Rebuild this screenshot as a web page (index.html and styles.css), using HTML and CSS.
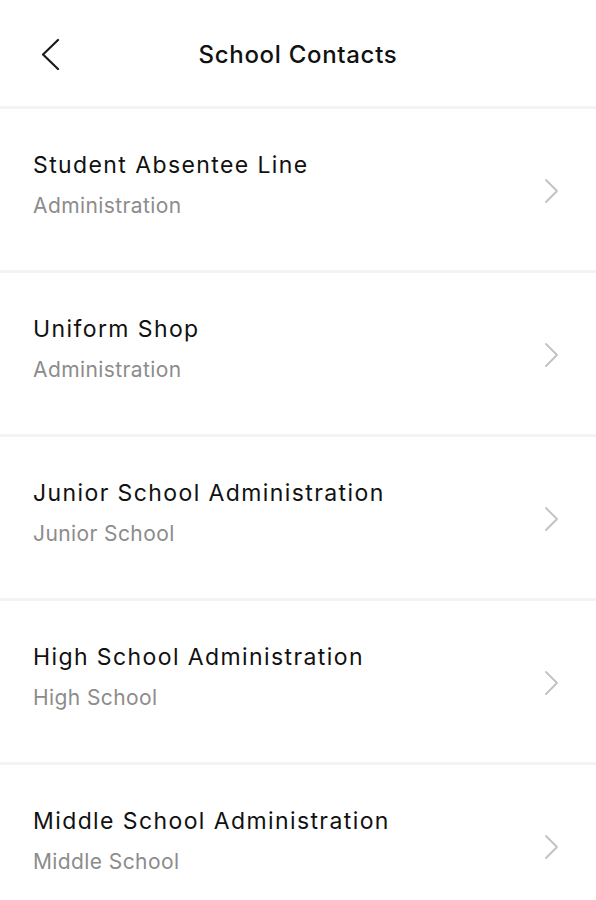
FILE: index.html
```html
<!DOCTYPE html>
<html lang="en">

<head>
    <meta charset="UTF-8">
    <meta name="viewport" content="width=device-width, initial-scale=1.0">
    <title>School Contacts</title>
    <link rel="stylesheet" href="styles.css">
</head>

<body>
    <div class="header">
        <a class="back-button" href="./">
            <svg width="20" height="32" viewBox="0 0 20 32">
                <polyline points="17,2 2,16.5 17,31" fill="none" stroke="#1a1a1a" stroke-width="2.2" stroke-linecap="round" stroke-linejoin="round" />
            </svg>
        </a>
        <h1>School Contacts</h1>
    </div>

    <!-- contact list -->
    <div class="contact-list">
        <a class="contact-row" href="#">
            <div class="contact-info">
                <div class="contact-name">Student Absentee Line</div>
                <div class="contact-group">Administration</div>
            </div>
            <svg class="chevron" width="16" height="26" viewBox="0 0 16 26">
                <polyline points="2,2 13,13 2,24" fill="none" stroke="#c2c2c2" stroke-width="1.8" stroke-linecap="round" stroke-linejoin="round" />
            </svg>
        </a>

        <a class="contact-row" href="#">
            <div class="contact-info">
                <div class="contact-name">Uniform Shop</div>
                <div class="contact-group">Administration</div>
            </div>
            <svg class="chevron" width="16" height="26" viewBox="0 0 16 26">
                <polyline points="2,2 13,13 2,24" fill="none" stroke="#c2c2c2" stroke-width="1.8" stroke-linecap="round" stroke-linejoin="round" />
            </svg>
        </a>

        <a class="contact-row" href="#">
            <div class="contact-info">
                <div class="contact-name">Junior School Administration</div>
                <div class="contact-group">Junior School</div>
            </div>
            <svg class="chevron" width="16" height="26" viewBox="0 0 16 26">
                <polyline points="2,2 13,13 2,24" fill="none" stroke="#c2c2c2" stroke-width="1.8" stroke-linecap="round" stroke-linejoin="round" />
            </svg>
        </a>

        <a class="contact-row" href="#">
            <div class="contact-info">
                <div class="contact-name">High School Administration</div>
                <div class="contact-group">High School</div>
            </div>
            <svg class="chevron" width="16" height="26" viewBox="0 0 16 26">
                <polyline points="2,2 13,13 2,24" fill="none" stroke="#c2c2c2" stroke-width="1.8" stroke-linecap="round" stroke-linejoin="round" />
            </svg>
        </a>

        <a class="contact-row" href="#">
            <div class="contact-info">
                <div class="contact-name">Middle School Administration</div>
                <div class="contact-group">Middle School</div>
            </div>
            <svg class="chevron" width="16" height="26" viewBox="0 0 16 26">
                <polyline points="2,2 13,13 2,24" fill="none" stroke="#c2c2c2" stroke-width="1.8" stroke-linecap="round" stroke-linejoin="round" />
            </svg>
        </a>
    </div>
</body>

</html>
```

FILE: styles.css
```css
body {
    font-family: Inter, "Noto Sans", sans-serif;
    background-color: #ffffff;
    color: #111111;
    margin: 0;
    padding: 0;
}

.header {
    display: flex;
    align-items: center;
    justify-content: center;
    position: relative;
    height: 106px;
    border-bottom: 3px solid #f3f3f3;
}

.header h1 {
    font-size: 24px;
    font-weight: 500;
    letter-spacing: 0.7px;
    margin: 0;
    padding-top: 2px;
}

.back-button {
    position: absolute;
    left: 41px;
    top: 38px;
    display: flex;
}

/* contact list */

.contact-row {
    display: flex;
    justify-content: space-between;
    align-items: center;
    box-sizing: border-box;
    height: 164px;
    padding: 0 36px 0 33px;
    border-bottom: 3px solid #f3f3f3;
    color: inherit;
    text-decoration: none;
}

.contact-info {
    margin-top: -10px;
}

.contact-name {
    font-size: 23px;
    line-height: 28px;
    font-weight: 400;
    letter-spacing: 1.4px;
}

.contact-group {
    font-size: 21px;
    line-height: 26px;
    color: #8c8c8c;
    letter-spacing: 0.4px;
    margin-top: 14px;
}

.chevron {
    margin-top: 3px;
}
```
